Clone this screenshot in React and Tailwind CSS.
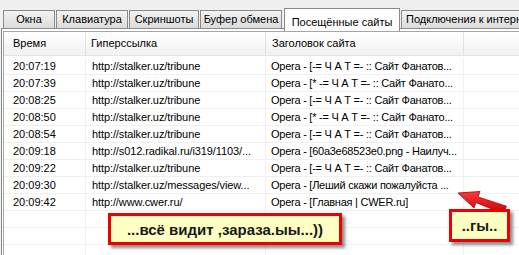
const tabs = [
  { label: "Окна", w: "w-[52px]" },
  { label: "Клавиатура", w: "w-[72px]" },
  { label: "Скриншоты", w: "w-[70px]" },
  { label: "Буфер обмена", w: "w-[82px]" },
];

const rows = [
  ["20:07:19", "http://stalker.uz/tribune", "Opera - [-= Ч А Т =- :: Сайт Фанатов..."],
  ["20:07:39", "http://stalker.uz/tribune", "Opera - [* -= Ч А Т =- :: Сайт Фанато..."],
  ["20:08:25", "http://stalker.uz/tribune", "Opera - [-= Ч А Т =- :: Сайт Фанатов..."],
  ["20:08:50", "http://stalker.uz/tribune", "Opera - [* -= Ч А Т =- :: Сайт Фанато..."],
  ["20:08:54", "http://stalker.uz/tribune", "Opera - [-= Ч А Т =- :: Сайт Фанатов..."],
  ["20:09:18", "http://s012.radikal.ru/i319/1103/...", "Opera - [60a3e68523e0.png - Наилуч..."],
  ["20:09:22", "http://stalker.uz/tribune", "Opera - [-= Ч А Т =- :: Сайт Фанатов..."],
  ["20:09:30", "http://stalker.uz/messages/view...", "Opera - [Леший скажи пожалуйста ..."],
  ["20:09:42", "http://www.cwer.ru/", "Opera - [Главная | CWER.ru]"],
  ["", "", ""],
  ["", "", ""],
  ["", "", ""],
];

function Row({ cells }) {
  return (
    <div className="flex h-[17px] border-b border-[#f0f0f0] leading-[16px]">
      <div className="w-[82px] shrink-0 border-r border-[#f0f0f0] pl-[9px] whitespace-nowrap overflow-hidden">{cells[0]}</div>
      <div className="w-[180px] shrink-0 border-r border-[#f0f0f0] pl-[6px] whitespace-nowrap overflow-hidden tracking-[-0.1px]">{cells[1]}</div>
      <div className="w-[198px] shrink-0 border-r border-[#f0f0f0] pl-[5px] whitespace-nowrap overflow-hidden tracking-[-0.25px]">{cells[2]}</div>
      <div className="flex-1" />
    </div>
  );
}

export default function App() {
  return (
    <div
      className="relative w-[519px] h-[255px] overflow-hidden bg-[#f0f0f0] text-[11px] text-black"
      style={{ fontFamily: '"Liberation Sans", Arial, sans-serif' }}
    >
      {/* tab strip */}
      <div className="flex items-end h-[29px] pl-[3px] gap-px">
        {tabs.map((t) => (
          <div
            key={t.label}
            className={`${t.w} h-[19px] shrink-0 flex items-center justify-center border border-[#8a8a8a] bg-gradient-to-b from-[#f2f2f2] to-[#dcdcdc] whitespace-nowrap`}
          >
            {t.label}
          </div>
        ))}
        <div className="relative z-10 ml-px w-[116px] h-[23px] -mb-[2px] shrink-0 flex items-start pt-[5px] justify-center border border-b-0 border-[#8a8a8a] bg-white whitespace-nowrap">
          Посещённые сайты
        </div>
        <div className="w-[140px] h-[19px] shrink-0 flex items-center pl-[4px] border border-r-0 border-[#8a8a8a] bg-gradient-to-b from-[#f2f2f2] to-[#dcdcdc] whitespace-nowrap overflow-hidden">
          Подключения к интернету
        </div>
      </div>

      {/* panel */}
      <div className="-mt-px ml-[1px] h-[230px] border-t border-l border-[#8a8a8a] bg-white pt-[2px] pl-[1px]">
        <div className="h-full border-t border-l border-[#a5a5a5] bg-white">
          <div className="flex h-[24px] leading-[23px] bg-gradient-to-b from-[#ffffff] to-[#f1f1f1] border-b border-[#e5e5e5]">
            <div className="w-[82px] shrink-0 border-r border-[#e2e2e2] pl-[9px]">Время</div>
            <div className="w-[180px] shrink-0 border-r border-[#e2e2e2] pl-[5px]">Гиперссылка</div>
            <div className="w-[198px] shrink-0 border-r border-[#e2e2e2] pl-[6px]">Заголовок сайта</div>
            <div className="flex-1" />
          </div>
          <div className="mt-[2px]">
            {rows.map((r, i) => (
              <Row key={i} cells={r} />
            ))}
          </div>
        </div>
      </div>

      {/* arrow */}
      <svg className="absolute left-[450px] top-[185px]" width="65" height="35" viewBox="0 0 65 35">
        <defs>
          <linearGradient id="ar" x1="0" y1="0" x2="0" y2="1">
            <stop offset="0" stopColor="#ff3a3a" />
            <stop offset="1" stopColor="#c80000" />
          </linearGradient>
        </defs>
        <polygon
          points="8,8 30,6.5 28,11.9 56.3,21.2 53.7,28.8 25.8,17.5 24,23"
          fill="url(#ar)"
          stroke="#a00000"
          strokeWidth="0.8"
          strokeLinejoin="round"
        />
      </svg>

      {/* callouts */}
      <div className="absolute left-[108px] top-[213px] w-[234px] h-[32px] border-[3px] border-[#ee0000] bg-[#ffffc4] shadow-[3px_3px_3px_rgba(0,0,0,0.45)] flex items-center justify-center pt-[3px] text-[15px] font-bold text-[#1a1a1a] whitespace-nowrap">
        ...всё видит ,зараза.ыы...))
      </div>
      <div className="absolute left-[449px] top-[209px] w-[61px] h-[33px] border-[3px] border-[#ee0000] bg-[#ffffc4] shadow-[3px_3px_3px_rgba(0,0,0,0.45)] flex items-center justify-center pt-[2px] text-[15px] font-bold text-[#1a1a1a] whitespace-nowrap">
        ..гы..
      </div>
    </div>
  );
}
